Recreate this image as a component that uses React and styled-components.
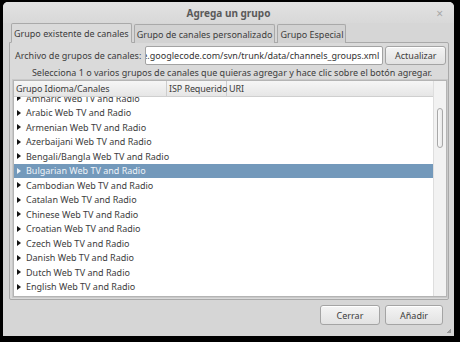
import React from "react";
import styled, { createGlobalStyle } from "styled-components";

const GlobalStyle = createGlobalStyle`
  html, body {
    margin: 0;
    padding: 0;
    background: #000;
    width: 460px;
    height: 342px;
    overflow: hidden;
  }
  * { box-sizing: border-box; }
`;

const groups = [
  "Amharic",
  "Arabic",
  "Armenian",
  "Azerbaijani",
  "Bengali/Bangla",
  "Bulgarian",
  "Cambodian",
  "Catalan",
  "Chinese",
  "Croatian",
  "Czech",
  "Danish",
  "Dutch",
  "English",
];

const App = () => (
  <>
    <GlobalStyle />
    <Screen>
      <Window>
        <TitleBar>
          <Title>Agrega un grupo</Title>
          <Close>×</Close>
        </TitleBar>
        <Tabs>
          <Tab active>Grupo existente de canales</Tab>
          <Tab>Grupo de canales personalizado</Tab>
          <Tab>Grupo Especial</Tab>
        </Tabs>
        <Page>
          <FileRow>
            <Label>Archivo de grupos de canales:</Label>
            <Entry>
              <span>http://tv-maxe.googlecode.com/svn/trunk/data/channels_groups.xml</span>
            </Entry>
            <Button width={61}>Actualizar</Button>
          </FileRow>
          <Hint>
            Selecciona 1 o varios grupos de canales que quieras agregar y hace clic sobre el botón agregar.
          </Hint>
          <Tree>
            <TreeBody>
              <Header>
                <HeadCell width={153}>Grupo Idioma/Canales</HeadCell>
                <HeadCell width={60}>ISP Requerido</HeadCell>
                <HeadCell grow>URI</HeadCell>
              </Header>
              <Rows>
                {groups.map((g) => (
                  <Row key={g} selected={g === "Bulgarian"}>
                    <Arrow selected={g === "Bulgarian"} />
                    {g} Web TV and Radio
                  </Row>
                ))}
              </Rows>
            </TreeBody>
            <Scrollbar>
              <Thumb />
            </Scrollbar>
          </Tree>
        </Page>
        <Footer>
          <Button width={60} height={20}>Cerrar</Button>
          <Button width={58} height={20}>Añadir</Button>
        </Footer>
        <Grip />
      </Window>
    </Screen>
  </>
);

const Screen = styled.div`
  width: 460px;
  height: 342px;
  padding: 2px 6px 6px 3px;
`;

const Window = styled.div`
  position: relative;
  width: 451px;
  height: 334px;
  background: #d6d6d6;
  border-radius: 5px 5px 0 0;
  display: flex;
  flex-direction: column;
  font-family: "Noto Sans", sans-serif;
  font-size: 9px;
  color: #3c3c3c;
`;

const TitleBar = styled.div`
  height: 21px;
  display: flex;
  align-items: center;
  justify-content: center;
  position: relative;
  background: linear-gradient(#e2e2e2, #d8d8d8);
  border-radius: 5px 5px 0 0;
`;

const Title = styled.div`
  font-weight: bold;
  font-size: 10px;
  color: #5a5a5a;
  padding-top: 1px;
`;

const Close = styled.div`
  position: absolute;
  right: 11px;
  top: 3px;
  font-size: 12px;
  color: #a8a8a8;
`;

const Tabs = styled.div`
  display: flex;
  gap: 2px;
  padding: 1px 0 0 8px;
  height: 20px;
  align-items: flex-end;
  position: relative;
  z-index: 1;
`;

const Tab = styled.div`
  height: ${(p) => (p.active ? "20px" : "19px")};
  padding: 0 2px;
  display: flex;
  align-items: center;
  border: 1px solid #a9a9a9;
  border-bottom: ${(p) => (p.active ? "1px solid #dadada" : "none")};
  border-radius: 2px 2px 0 0;
  background: ${(p) => (p.active ? "#dadada" : "#d2d2d2")};
  color: #3c3c3c;
  white-space: nowrap;
`;

const Page = styled.div`
  margin: -1px 5px 0 6px;
  border: 1px solid #a9a9a9;
  border-radius: 0 2px 2px 2px;
  background: #dadada;
  padding: 2px 1px 2px 3px;
  display: flex;
  flex-direction: column;
  height: 258px;
`;

const FileRow = styled.div`
  display: flex;
  align-items: center;
  gap: 2px;
  height: 20px;
`;

const Label = styled.div`
  white-space: nowrap;
  padding: 0 2px 0 2px;
`;

const Entry = styled.div`
  width: 238px;
  height: 19px;
  background: #fff;
  border: 1px solid #a3a3a3;
  border-radius: 2px;
  display: flex;
  justify-content: flex-end;
  align-items: center;
  overflow: hidden;
  white-space: nowrap;
  padding-right: 3px;
  color: #333;
`;

const Button = styled.div`
  width: ${(p) => p.width}px;
  height: ${(p) => p.height || 19}px;
  border: 1px solid #a4a4a4;
  border-radius: 3px;
  background: linear-gradient(#f4f4f4, #e2e2e2);
  display: flex;
  align-items: center;
  justify-content: center;
  color: #3c3c3c;
  box-shadow: inset 0 1px 0 #fff;
`;

const Hint = styled.div`
  text-align: center;
  height: 15px;
  line-height: 15px;
  white-space: nowrap;
  padding-left: 4px;
`;

const Tree = styled.div`
  flex: 1;
  display: flex;
  background: #fff;
  border: 1px solid #b4b4b4;
  box-shadow: 0 0 0 1px #c9c9c9;
  overflow: hidden;
`;

const TreeBody = styled.div`
  flex: 1;
  display: flex;
  flex-direction: column;
  overflow: hidden;
`;

const Header = styled.div`
  display: flex;
  height: 16px;
  background: linear-gradient(#f6f6f6, #e6e6e6);
  border-bottom: 1px solid #cfcfcf;
  position: relative;
  z-index: 1;
`;

const HeadCell = styled.div`
  ${(p) => (p.grow ? "flex: 1;" : `width: ${p.width}px;`)}
  padding-left: 2px;
  display: flex;
  align-items: center;
  border-right: ${(p) => (p.grow ? "none" : "1px solid #cdcdcd")};
  white-space: nowrap;
  letter-spacing: -0.1px;
`;

const Rows = styled.div`
  margin-top: -6px;
`;

const Row = styled.div`
  height: 14.5px;
  display: flex;
  align-items: center;
  padding-left: 3px;
  white-space: nowrap;
  background: ${(p) => (p.selected ? "#7399bb" : "transparent")};
  color: ${(p) => (p.selected ? "#eef3f8" : "#3c3c3c")};
`;

const Arrow = styled.span`
  width: 0;
  height: 0;
  border-top: 3.5px solid transparent;
  border-bottom: 3.5px solid transparent;
  border-left: 4px solid ${(p) => (p.selected ? "#eef3f8" : "#111")};
  margin-right: 5px;
`;

const Scrollbar = styled.div`
  width: 13px;
  background: #f2f2f2;
  border-left: 1px solid #dedede;
  padding: 27px 2px 0 3px;
`;

const Thumb = styled.div`
  height: 40px;
  width: 6px;
  border: 1px solid #a8a8a8;
  border-radius: 3px;
  background: linear-gradient(90deg, #fafafa, #e8e8e8);
`;

const Footer = styled.div`
  display: flex;
  justify-content: flex-end;
  gap: 5px;
  padding: 5px 11px 0 0;
`;

const Grip = styled.div`
  position: absolute;
  right: 3px;
  bottom: 3px;
  width: 5px;
  height: 5px;
  background: linear-gradient(135deg, transparent 50%, #9a9a9a 50%);
`;

export default App;
